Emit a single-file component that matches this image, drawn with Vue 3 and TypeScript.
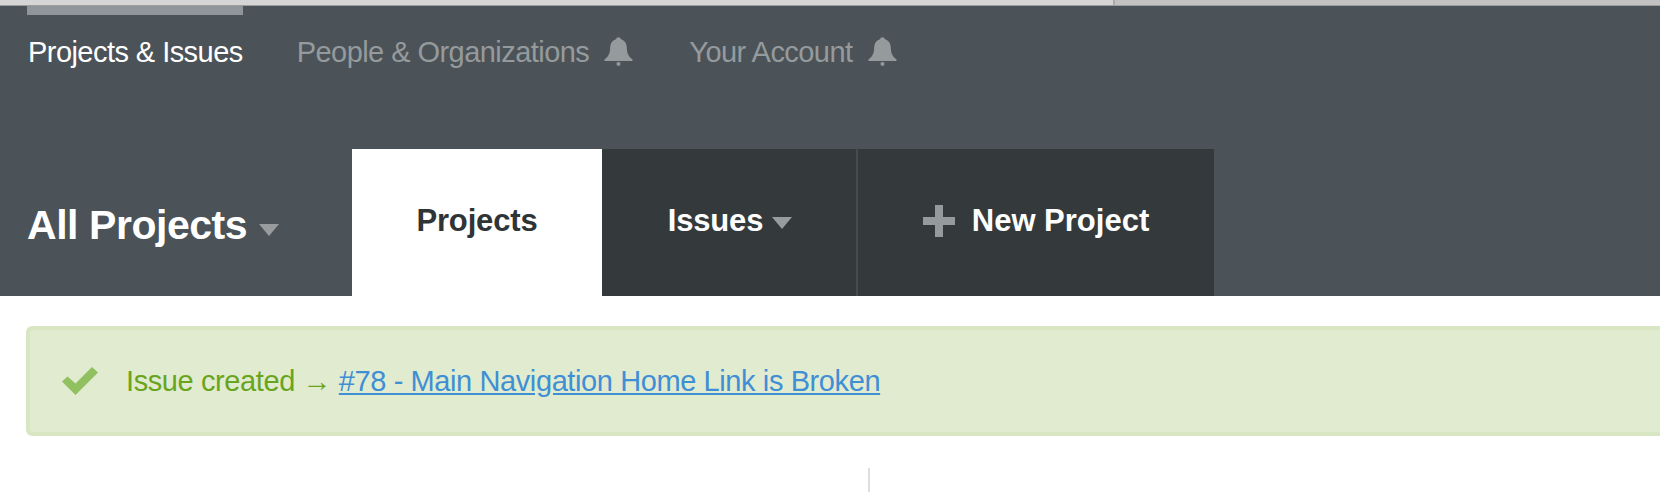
<script setup lang="ts">
const bell = 'M12 1c1 0 1.700.6 1.900 1.500 3 .8 4.300 3.200 4.500 6.300.2 4 .7 6.700 4.300 9.200.5.4.3 1.300-.5 1.300H1.800c-.8 0-1-.9-.5-1.300 3.600-2.500 4.100-5.200 4.300-9.200.2-3.100 1.500-5.500 4.500-6.300.2-.9.9-1.500 1.900-1.500zM10.600 20.300h2.800v1.900c0 .5-.6.9-1.400.9s-1.400-.4-1.400-.9z'
</script>

<template>
  <div class="page">
    <div class="chrome">
      <div class="chrome-left"></div>
      <div class="chrome-right"></div>
    </div>
    <header class="header">
      <nav class="topnav">
        <a class="topitem active">Projects &amp; Issues</a>
        <a class="topitem">People &amp; Organizations
          <svg class="bell" viewBox="0 0 24 24"><path :d="bell" /></svg>
        </a>
        <a class="topitem">Your Account
          <svg class="bell" viewBox="0 0 24 24"><path :d="bell" /></svg>
        </a>
      </nav>
      <div class="tabbar">
        <div class="title">All Projects <span class="caret big"></span></div>
        <a class="tab selected">Projects</a>
        <a class="tab dark issues">Issues <span class="caret"></span></a>
        <a class="tab dark newp">
          <svg class="plus" viewBox="0 0 32 32"><path d="M12 0h8v12h12v8H20v12h-8V20H0v-8h12z" /></svg>
          New Project
        </a>
      </div>
    </header>
    <div class="alert">
      <svg class="check" viewBox="0 0 36 28"><path d="M0 14.500 5.500 9.500 13.500 16.500 30 0 36 5.500 13.500 28z" /></svg>
      <span class="msg">Issue created → <a class="link">#78 - Main Navigation Home Link is Broken</a></span>
    </div>
    <div class="content">
      <div class="col-left"></div>
    </div>
  </div>
</template>

<style>
html, body { margin: 0; background: #fff; overflow: hidden; }
</style>

<style scoped>
.page {
  width: 1660px;
  height: 492px;
  overflow: hidden;
  font-family: "Liberation Sans", Arial, sans-serif;
}
.chrome { display: flex; height: 6px; }
.chrome-left { width: 1115px; background: #d5d5d5; border-bottom: 1px solid #9a9c9d; border-right: 2px solid #aaa; box-sizing: border-box; }
.chrome-right { flex: 1; background: #c2c2c2; border-bottom: 1px solid #9a9c9d; box-sizing: border-box; }
.header {
  height: 290px;
  background: #4b5358;
  display: flex;
  flex-direction: column;
  justify-content: space-between;
}
.topnav { display: flex; padding-left: 27px; height: 100px; }
.topitem {
  display: flex;
  align-items: flex-start;
  gap: 14px;
  margin-right: 53px;
  padding: 20px 1px 0;
  height: 20px;
  font-size: 29px;
  line-height: 34px;
  letter-spacing: -0.55px;
  color: #959a9d;
  white-space: nowrap;
  border-top: 9px solid transparent;
}
.topitem.active { color: #fff; border-top-color: #8f9598; padding-right: 0; margin-right: 53px; }
.bell { width: 31px; height: 31px; fill: #959a9d; margin-top: 1px; flex: none; }
.tabbar { display: flex; align-items: stretch; height: 147px; }
.title {
  width: 325px;
  padding-left: 27px;
  display: flex;
  align-items: center;
  gap: 12px;
  font-size: 41px;
  font-weight: 700;
  letter-spacing: -0.45px;
  color: #fff;
  white-space: nowrap;
  padding-top: 6px;
  height: 141px;
  flex: none;
}
.tab {
  display: flex;
  align-items: center;
  justify-content: center;
  box-sizing: border-box;
  font-size: 31px;
  font-weight: 700;
  letter-spacing: -0.15px;
  white-space: nowrap;
  padding-bottom: 4px;
}
.selected { width: 250px; background: #fff; color: #2f3436; }
.dark { background: #343a3b; color: #fff; }
.issues { width: 256px; gap: 9px; border-right: 2px solid #454c4f; padding-left: 2px; }
.newp { width: 356px; gap: 17px; letter-spacing: 0; }
.caret {
  width: 0;
  height: 0;
  border-left: 10px solid transparent;
  border-right: 10px solid transparent;
  border-top: 12px solid #999c9e;
  margin-top: 4px;
}
.caret.big { margin-top: 8px; }
.plus { width: 32px; height: 32px; fill: #959a9d; }
.alert {
  display: flex;
  align-items: center;
  box-sizing: border-box;
  width: 1700px;
  height: 110px;
  margin: 30px 0 0 26px;
  padding-left: 32px;
  background: #e1ebd0;
  border: 4px solid #d9e6c4;
  border-radius: 6px;
  gap: 28px;
}
.check { width: 36px; height: 28px; fill: #90c060; flex: none; }
.msg { font-size: 29px; letter-spacing: -0.4px; color: #69a51c; white-space: nowrap; }
.link { color: #3f8fd5; text-decoration: underline; }
.content { display: flex; padding-top: 32px; height: 24px; }
.col-left { width: 868px; height: 24px; border-right: 2px solid #dedede; }
</style>
